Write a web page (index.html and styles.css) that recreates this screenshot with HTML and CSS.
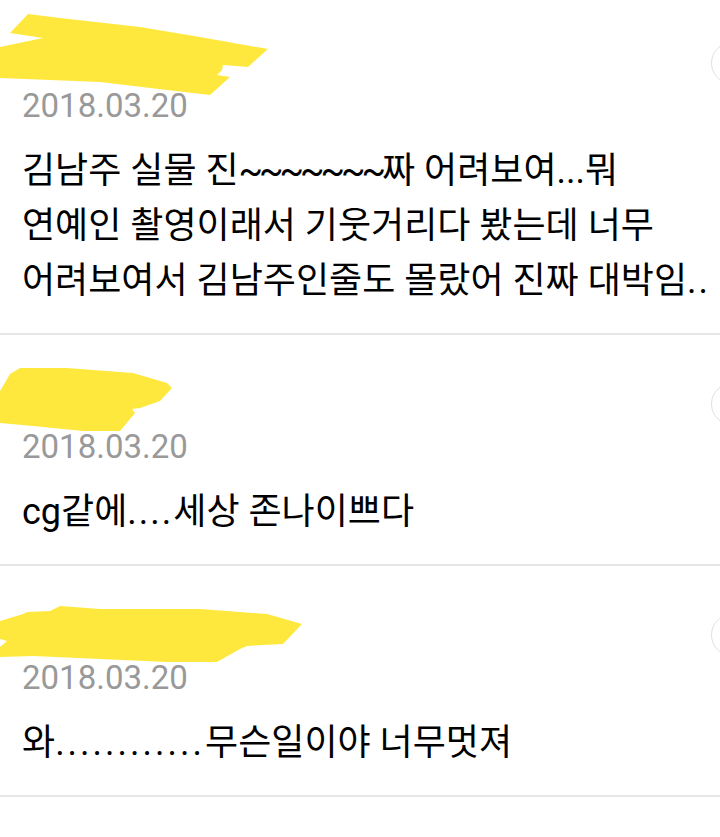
FILE: index.html
```html
<!DOCTYPE html>
<html lang="ko">
<head>
    <meta charset="UTF-8">
    <meta name="viewport" content="width=device-width, initial-scale=1.0">
    <title>댓글</title>
    <link rel="stylesheet" href="styles.css">
</head>
<body>
    <div class="comment-list">
        <!-- 댓글 1 -->
        <div class="comment">
            <div class="name">
                <svg class="scribble" width="300" height="92" viewBox="0 0 300 92">
                    <polygon points="10,39 28,20 60,24 140,33 200,43 268,55 248,73 223,71 222,76 217,81 230,83 210,101 167,96 100,88 0,84 0,53 43,44"/>
                </svg>
            </div>
            <div class="date">2018.03.20</div>
            <div class="body">김남주 실물 진<span class="tilde">~~~~~~~</span>짜 어려보여...뭐<br>연예인 촬영이래서 기웃거리다 봤는데 너무<br>어려보여서 김남주인줄도 몰랐어 진짜 대박임<span class="dots">..</span></div>
            <span class="more"></span>
        </div>

        <!-- 댓글 2 -->
        <div class="comment">
            <div class="name">
                <svg class="scribble" width="300" height="92" viewBox="0 0 300 92">
                    <polygon points="3,51 10,39 20,33 67,33 133,38 167,48 172,53 160,66 140,73 132,74 135,78 120,96 83,96 33,91 0,88 0,56"/>
                </svg>
            </div>
            <div class="date">2018.03.20</div>
            <div class="body">cg같에<span class="dots">....</span>세상 존나이쁘다</div>
            <span class="more"></span>
        </div>

        <!-- 댓글 3 -->
        <div class="comment">
            <div class="name">
                <svg class="scribble" width="310" height="92" viewBox="0 0 310 92">
                    <polygon points="0,55 23,48 27,46 50,45 60,40 100,43 200,43 267,48 302,58 283,78 247,80 240,83 217,96 167,96 100,93 33,90 0,91 0,81 7,75 0,73"/>
                </svg>
            </div>
            <div class="date">2018.03.20</div>
            <div class="body">와<span class="dots wide">............</span>무슨일이야 너무멋져</div>
            <span class="more"></span>
        </div>
    </div>
</body>
</html>
```

FILE: styles.css
```css
/* Layout principal */
html, body {
    margin: 0;
    background: #fff;
    overflow: hidden;
}
body {
    font-family: Roboto, "Noto Sans CJK KR", sans-serif;
    color: #000;
}
.comment-list {
    margin-top: -6px;
}
.comment {
    position: relative;
    padding-bottom: 24px;
    border-bottom: 2px solid #e6e6e6;
}
.name {
    height: 92px;
}
.scribble {
    display: block;
    overflow: visible;
}
.scribble polygon {
    fill: #ffe83d;
}
.date {
    padding-left: 22px;
    font-size: 33px;
    line-height: 40px;
    color: #999;
}
.body {
    margin-top: 18px;
    padding-left: 22px;
    font-size: 36px;
    line-height: 55px;
    white-space: nowrap;
}
.dots {
    letter-spacing: 2px;
}
.dots.wide {
    letter-spacing: 3px;
}
.tilde {
    letter-spacing: -4px;
}
/* botão cortado na borda direita */
.more {
    position: absolute;
    top: 48px;
    right: -33px;
    width: 40px;
    height: 40px;
    border: 1.5px solid #e0e0e0;
    border-radius: 50%;
}
```
